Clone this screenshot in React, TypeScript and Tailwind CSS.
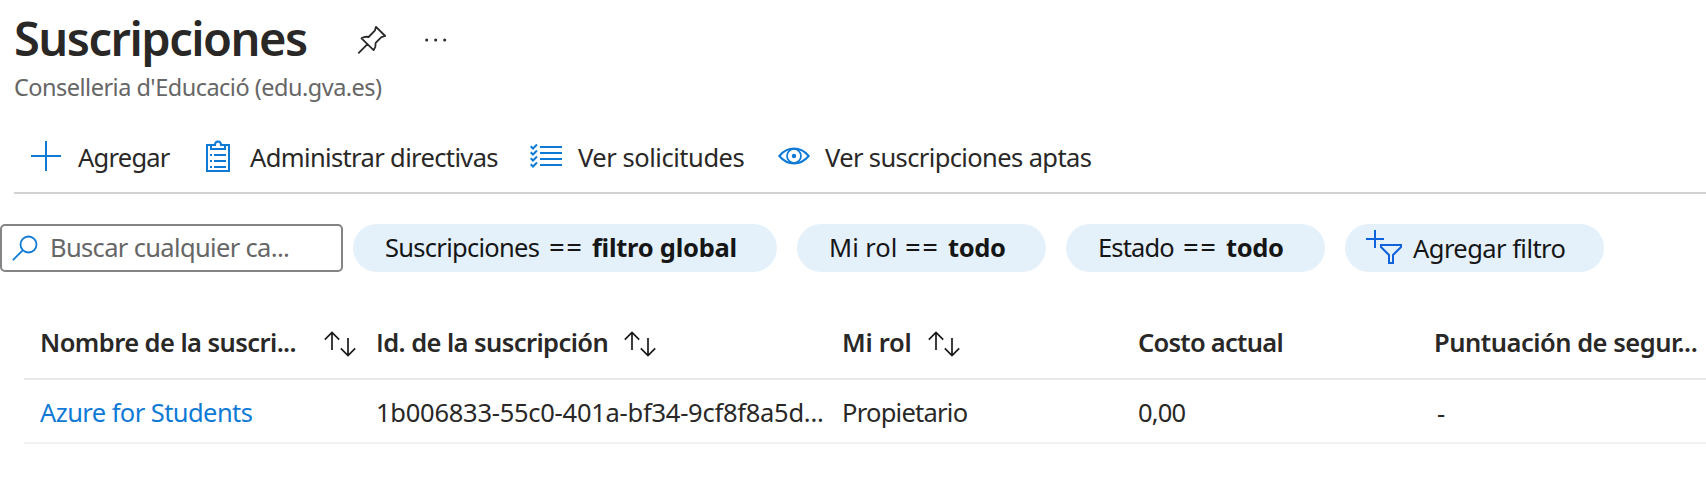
import type { ReactNode } from "react";

const BLUE = "#0f7ad6";

function PinIcon() {
  return (
    <svg width="30" height="30" viewBox="0 0 30 30" fill="none" stroke="#292827" strokeWidth="1.8" strokeLinejoin="round">
      <path d="M19 1.800 28.200 11l-3.800 1.200c-1.600 1.500-3.500 3.500-5.800 5.900.3 2.500-.4 4.900-2 7L4.500 13.300c2.300-1.400 4.600-1.900 7.100-1.300l6.200-6.300zM10.500 19.200 1.300 28.400" />
    </svg>
  );
}

function DotsIcon() {
  return (
    <svg width="24" height="6" viewBox="0 0 24 6" fill="#292827">
      <circle cx="2.700" cy="3" r="1.500" />
      <circle cx="11.700" cy="3" r="1.500" />
      <circle cx="20.700" cy="3" r="1.500" />
    </svg>
  );
}

function PlusIcon() {
  return (
    <svg width="32" height="32" viewBox="0 0 32 32" stroke={BLUE} strokeWidth="2">
      <path d="M1 16h30M16 1v30" />
    </svg>
  );
}

function ClipboardIcon() {
  return (
    <svg width="24" height="32" viewBox="0 0 24 32" fill="none" stroke={BLUE} strokeWidth="2">
      <path d="M6 5H1v26h22V5h-5" />
      <path d="M5 5v4h14V5h-4c0-2-1-3.500-3-3.500S9 3 9 5z" />
      <path d="M4 15h2M4 21h2M4 27h2M8 15h12M8 21h12M8 27h12" />
    </svg>
  );
}

function ListIcon() {
  return (
    <svg width="32" height="26" viewBox="0 0 32 26" fill="none" stroke={BLUE} strokeWidth="2">
      <path d="M10 4h22M10 10h22M10 16h22M10 22h22" />
      <path d="m.700 3.200 2.300 2.300 4-4M.700 9.200 3 11.500l4-4M.700 15.200 3 17.500l4-4M.700 21.200 3 23.500l4-4" strokeWidth="2" />
    </svg>
  );
}

function EyeIcon() {
  return (
    <svg width="32" height="20" viewBox="0 0 32 20" fill="none" stroke={BLUE} strokeWidth="2">
      <path d="M1.300 10C5.500 5 10 2.600 16 2.600S26.500 5 30.700 10C26.500 15 22 17.400 16 17.400S5.500 15 1.300 10z" />
      <circle cx="16" cy="10" r="7" strokeWidth="1.700" />
      <circle cx="16" cy="10" r="2.200" fill={BLUE} stroke="none" />
    </svg>
  );
}

function SearchIcon() {
  return (
    <svg width="26" height="26" viewBox="0 0 26 26" fill="none" stroke={BLUE} strokeWidth="1.800">
      <circle cx="16.500" cy="9.500" r="8" />
      <path d="M10.700 15.300.900 25.100" />
    </svg>
  );
}

function AddFilterIcon() {
  return (
    <svg width="36" height="34" viewBox="0 0 36 34" fill="none" stroke="#0f62dc" strokeWidth="2">
      <path d="M0 9h18M9 0v18" />
      <path d="M15 15h20v2l-8 8v8h-4v-8l-8-8z" />
    </svg>
  );
}

function SortIcon() {
  return (
    <svg width="32" height="26" viewBox="0 0 32 26" fill="none" stroke="#1b1a19" strokeWidth="1.700">
      <path d="M8 19V1.500M.8 8.700 8 1.500l7.200 7.200M24 7v17.500M16.800 17.300l7.200 7.200 7.200-7.200" />
    </svg>
  );
}

function Command({ icon, className, children }: { icon: ReactNode; className: string; children: ReactNode }) {
  return (
    <button className={`flex h-9 shrink-0 items-center whitespace-nowrap text-left ${className}`}>
      {icon}
      {children}
    </button>
  );
}

function Pill({ className, children }: { className: string; children: ReactNode }) {
  return (
    <button className={`flex h-12 shrink-0 items-center whitespace-nowrap rounded-full bg-[#e4f1fb] text-left text-[#161616] ${className}`}>
      {children}
    </button>
  );
}

export default function App() {
  return (
    <main className="h-[480px] w-[1706px] overflow-hidden bg-white font-['Noto_Sans','Open_Sans',sans-serif] text-[25.5px] leading-9 text-[#292827]">
      <header className="pt-1.5">
        <div className="flex h-16 items-center pl-3.5">
          <h1 className="w-[343px] whitespace-nowrap text-[47px] font-semibold leading-[64px] tracking-[-1.5px]">Suscripciones</h1>
          <button className="mt-1 w-[67px]"><PinIcon /></button>
          <button className="mt-1"><DotsIcon /></button>
        </div>
        <p className="mt-px whitespace-nowrap pl-3.5 text-[23.5px] leading-8 tracking-[-0.51px] text-[#666]">Conselleria d'Educació (edu.gva.es)</p>
      </header>

      <nav className="ml-3.5 mt-9 flex h-[55px] border-b-2 border-[#d2d2d2] pl-4">
        <Command className="w-[176px]" icon={<span className="-mt-0.5 w-12"><PlusIcon /></span>}>
          <span className="tracking-[-0.75px]">Agregar</span>
        </Command>
        <Command className="w-[324px]" icon={<span className="-mt-0.5 w-11"><ClipboardIcon /></span>}>
          <span className="tracking-[-0.63px]">Administrar directivas</span>
        </Command>
        <Command className="w-[248px]" icon={<span className="-mt-0.5 w-12"><ListIcon /></span>}>
          <span className="tracking-[-0.46px]">Ver solicitudes</span>
        </Command>
        <Command className="" icon={<span className="-mt-0.5 w-[47px]"><EyeIcon /></span>}>
          <span className="tracking-[-0.62px]">Ver suscripciones aptas</span>
        </Command>
      </nav>

      <section className="mt-[30px] flex">
        <div className="mr-[10px] flex h-12 w-[343px] shrink-0 items-center rounded-[5px] border-2 border-[#848484] pl-[10px]">
          <SearchIcon />
          <span className="ml-3 whitespace-nowrap pb-0.5 tracking-[-0.66px] text-[#666]">Buscar cualquier ca...</span>
        </div>
        <Pill className="mr-5 w-[424px] pb-0.5 pl-8">
          <span className="w-[164px] tracking-[-0.72px]">Suscripciones</span>
          <span className="w-[43px] text-[27.5px] tracking-[1.4px]">==</span>
          <strong className="tracking-[-0.26px]">filtro global</strong>
        </Pill>
        <Pill className="mr-5 w-[249px] pb-0.5 pl-[32px]">
          <span className="w-[76px]">Mi rol</span>
          <span className="w-[43px] text-[27.5px] tracking-[1.4px]">==</span>
          <strong className="tracking-[-0.37px]">todo</strong>
        </Pill>
        <Pill className="mr-5 w-[259px] pb-0.5 pl-[32px]">
          <span className="w-[85px] tracking-[-0.85px]">Estado</span>
          <span className="w-[43px] text-[27.5px] tracking-[1.4px]">==</span>
          <strong className="tracking-[-0.37px]">todo</strong>
        </Pill>
        <Pill className="w-[259px] pl-[21px]">
          <span className="-mt-0.5 w-[47px]"><AddFilterIcon /></span>
          <span className="tracking-[-0.55px]">Agregar filtro</span>
        </Pill>
      </section>

      <section className="ml-6 mt-[34px] whitespace-nowrap">
        <div className="grid h-[74px] grid-cols-[336px_466px_296px_296px_1fr] items-center border-b-2 border-[#e8e8e8] pl-4 font-semibold">
          <div className="flex items-center">
            <span className="w-[284px] tracking-[-0.56px]">Nombre de la suscri...</span>
            <span className="pt-1"><SortIcon /></span>
          </div>
          <div className="flex items-center">
            <span className="w-[248px] tracking-[-0.57px]"><span className="font-['Open_Sans',sans-serif]">I</span>d. de la suscripción</span>
            <span className="pt-1"><SortIcon /></span>
          </div>
          <div className="flex items-center">
            <span className="w-[86px] tracking-[-0.25px]">Mi rol</span>
            <span className="pt-1"><SortIcon /></span>
          </div>
          <div className="tracking-[-0.74px]">Costo actual</div>
          <div className="tracking-[-0.48px]">Puntuación de segur...</div>
        </div>
        <div className="grid h-16 grid-cols-[336px_466px_296px_296px_1fr] items-center border-b-2 border-[#f2f2f2] pl-4 pt-0.5">
          <a className="tracking-[-0.57px] text-[#0f7ad6]">Azure for Students</a>
          <div className="tracking-[-0.26px]">1b006833-55c0-401a-bf34-9cf8f8a5d...</div>
          <div className="tracking-[-0.75px]">Propietario</div>
          <div className="tracking-[-0.8px]">0,00</div>
          <div className="pl-[3px] pt-0.5">-</div>
        </div>
      </section>
    </main>
  );
}
